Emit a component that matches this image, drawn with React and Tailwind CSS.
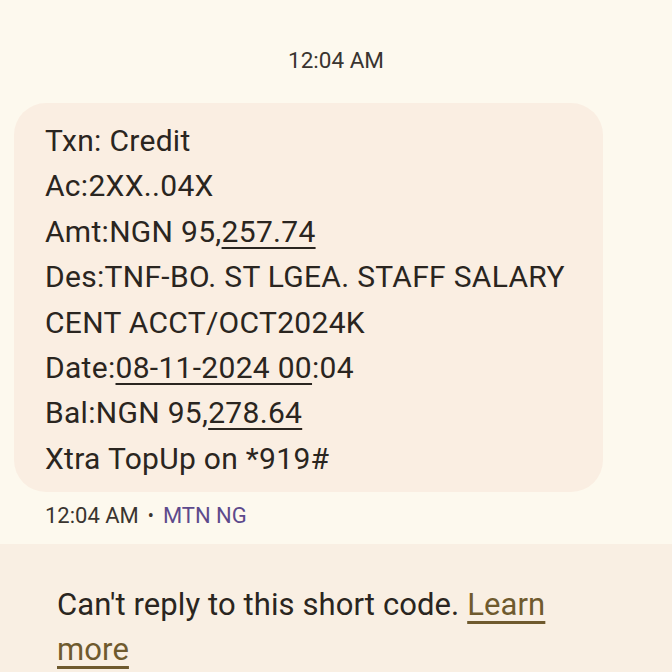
const lines = [
  { text: 'Txn: Credit' },
  { text: 'Ac:2XX..04X' },
  { pre: 'Amt:NGN 95,', u: '257.74' },
  { text: 'Des:TNF-BO. ST LGEA. STAFF SALARY' },
  { text: 'CENT ACCT/OCT2024K' },
  { pre: 'Date:', u: '08-11-2024 00', post: ':04' },
  { pre: 'Bal:NGN 95,', u: '278.64' },
  { text: 'Xtra TopUp on *919#' },
];

export default function App() {
  return (
    <div className="w-[672px] h-[672px] overflow-hidden bg-[#fdf9ee] flex flex-col font-['Roboto',sans-serif] text-[#2a2520]">
      <div className="pt-[46px] h-[104px] text-center text-[22.5px] leading-[28px] text-[#3a3530]">12:04 AM</div>

      <div className="ml-[14px] w-[589px] h-[389px] shrink-0 rounded-[32px] bg-[#faeee2] pl-[31px] pt-[15px]">
        {lines.map((l, i) => (
          <div key={i} className="text-[30px] leading-[45.4px] tracking-[0.3px] whitespace-nowrap">
            {l.text ? (
              l.text
            ) : (
              <>
                {l.pre}
                <span className="underline decoration-2 underline-offset-[5px]">{l.u}</span>
                {l.post}
              </>
            )}
          </div>
        ))}
      </div>

      <div className="pl-[45px] pt-[12px] h-[52px] shrink-0 text-[22px] leading-[24px] text-[#3a3530] flex items-start gap-[9px]">
        <span>12:04 AM</span>
        <span className="text-[18px]">•</span>
        <span className="text-[#5d4a8c]">MTN NG</span>
      </div>

      <div className="flex-1 bg-[#f9efe3] pl-[57px] pt-[38px] text-[31px] leading-[45px] tracking-[0.1px]">
        Can't reply to this short code.{' '}
        <span className="text-[#6f5a2e] underline decoration-[3px] underline-offset-[6px]">Learn</span>
        <br />
        <span className="text-[#6f5a2e] underline decoration-[3px] underline-offset-[6px]">more</span>
      </div>
    </div>
  );
}
